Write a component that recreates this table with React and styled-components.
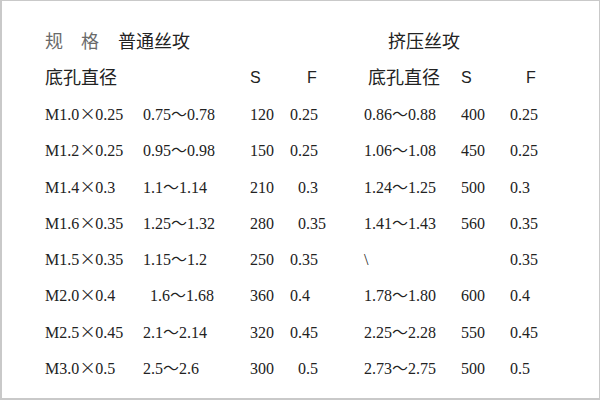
import React from 'react';
import styled, { createGlobalStyle } from 'styled-components';

const GlobalStyle = createGlobalStyle`
  html, body {
    margin: 0;
    padding: 0;
    background: #ffffff;
  }
`;

const Frame = styled.div`
  width: 600px;
  height: 400px;
  box-sizing: border-box;
  border: 1px solid #c9c9c9;
  border-left-width: 2px;
  border-bottom-width: 2px;
  padding: 21px 0 0 43px;
  background: #fff;
  color: #222;
`;

// columns start at x = 45, 143, 250, 290, 364, 461, 510
const Row = styled.div`
  display: grid;
  grid-template-columns: 98px 107px 40px 74px 97px 49px 1fr;
  height: ${(p) => p.$h || 36.3}px;
  align-items: start;
`;

const HeadCell = styled.div`
  grid-column: ${(p) => p.$col || 'auto'};
  padding-left: ${(p) => p.$indent || 0}px;
  font-family: 'Noto Sans CJK SC', 'Noto Sans', sans-serif;
  font-size: 18px;
  line-height: 36px;
  white-space: nowrap;
`;

const Letter = styled.div`
  grid-column: ${(p) => p.$col || 'auto'};
  padding-left: ${(p) => p.$indent || 0}px;
  padding-top: 2px;
  font-family: 'Liberation Sans', Arial, sans-serif;
  font-size: 16px;
  line-height: 36px;
`;

const Muted = styled.span`
  color: #6a6a6a;
  letter-spacing: 18px;
  margin-right: 1px;
`;

const Cell = styled.div`
  padding-left: ${(p) => p.$indent || 0}px;
  font-family: 'Liberation Serif', 'Noto Sans CJK SC', serif;
  font-size: 16px;
  line-height: 36px;
  white-space: nowrap;
`;

const Times = styled.span`
  display: inline-block;
  width: 16px;
  text-align: center;
  font-family: 'DejaVu Sans', sans-serif;
  font-size: 20px;
  font-weight: 200;
  line-height: 1;
`;

const rows = [
  ['M1.0', '0.25', '0.75～0.78', '120', '0.25', '0.86～0.88', '400', '0.25'],
  ['M1.2', '0.25', '0.95～0.98', '150', '0.25', '1.06～1.08', '450', '0.25'],
  ['M1.4', '0.3', '1.1～1.14', '210', '0.3', '1.24～1.25', '500', '0.3'],
  ['M1.6', '0.35', '1.25～1.32', '280', '0.35', '1.41～1.43', '560', '0.35'],
  ['M1.5', '0.35', '1.15～1.2', '250', '0.35', '\\', '', '0.35'],
  ['M2.0', '0.4', '1.6～1.68', '360', '0.4', '1.78～1.80', '600', '0.4'],
  ['M2.5', '0.45', '2.1～2.14', '320', '0.45', '2.25～2.28', '550', '0.45'],
  ['M3.0', '0.5', '2.5～2.6', '300', '0.5', '2.73～2.75', '500', '0.5'],
];

// a few values sit a little to the right of their column in the source
const shifted = {
  '2-4': 8,
  '3-4': 8,
  '5-2': 7,
  '7-4': 8,
};

export default function App() {
  return (
    <>
      <GlobalStyle />
      <Frame>
        <Row $h={36}>
          <HeadCell $col="1 / span 3">
            <Muted>规格</Muted>普通丝攻
          </HeadCell>
          <HeadCell $col="5 / span 3" $indent={24}>
            挤压丝攻
          </HeadCell>
        </Row>
        <Row $h={39}>
          <HeadCell $col="1 / span 2">底孔直径</HeadCell>
          <Letter $col="3">S</Letter>
          <Letter $col="4" $indent={17}>F</Letter>
          <HeadCell $col="5" $indent={4}>底孔直径</HeadCell>
          <Letter $col="6">S</Letter>
          <Letter $col="7" $indent={16}>F</Letter>
        </Row>
        {rows.map(([m, pitch, ...rest], i) => (
          <Row key={m + pitch}>
            <Cell>
              {m}
              <Times>×</Times>
              {pitch}
            </Cell>
            {rest.map((v, j) => (
              <Cell key={j} $indent={shifted[`${i}-${j + 2}`]}>
                {v}
              </Cell>
            ))}
          </Row>
        ))}
      </Frame>
    </>
  );
}
